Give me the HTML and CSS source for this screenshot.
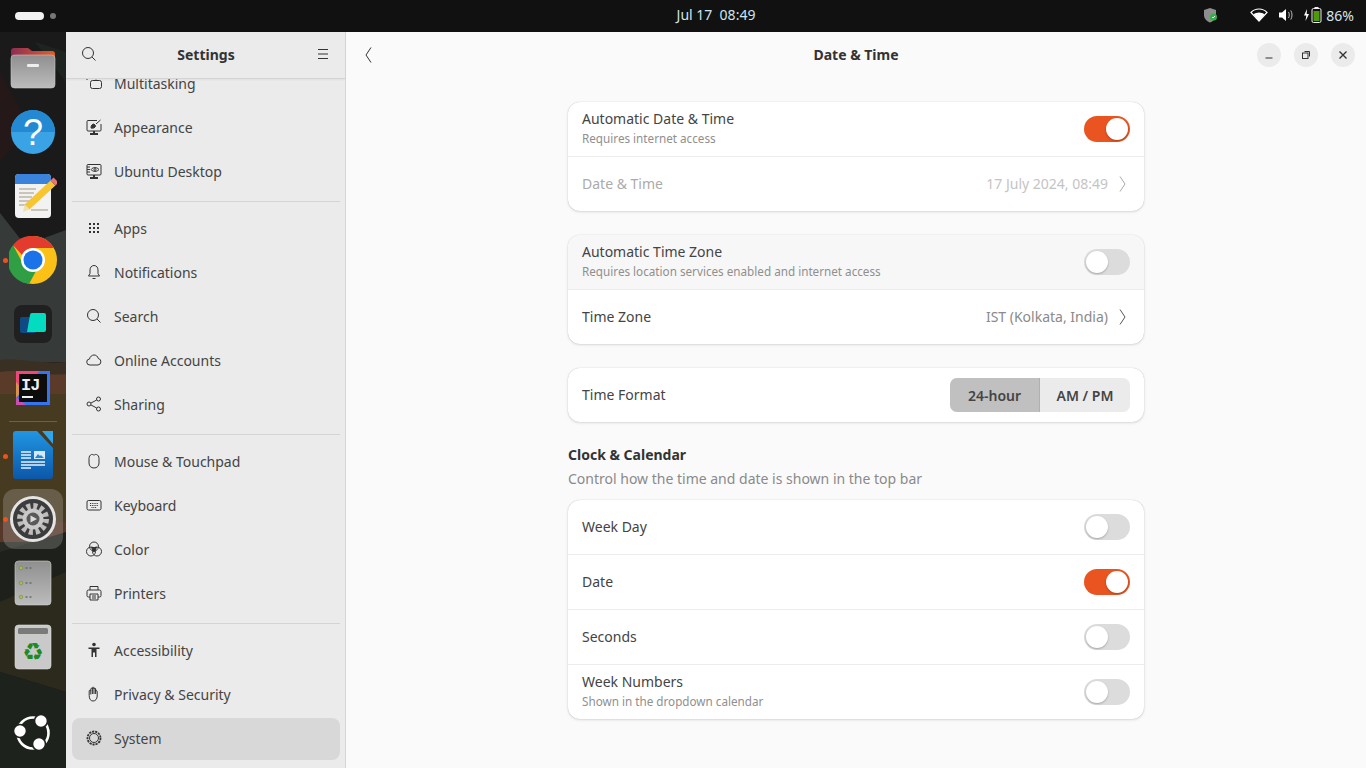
FILE: index.html
```html
<!DOCTYPE html>
<html lang="en">
<head>
    <meta charset="UTF-8">
    <meta name="viewport" content="width=device-width, initial-scale=1.0">
    <title>Date &amp; Time - Settings</title>
    <link rel="stylesheet" href="styles.css">
</head>
<body>
    <!-- Top bar -->
    <header class="topbar">
        <div class="workspaces"><span class="ws-pill"></span><span class="ws-dot"></span></div>
        <div class="clock">Jul 17&nbsp;&nbsp;08:49</div>
        <div class="tray">
            <svg class="tray-shield" width="18" height="18" viewBox="0 0 18 18"><path d="M8 2l6 2v5c0 3.500-2.500 6-6 7.500C4.500 15 2 12.500 2 9V4z" fill="#8e8e8e"/><circle cx="11.500" cy="11" r="3.500" fill="#2fb344"/><path d="M10 11l1 1 2-2" stroke="#fff" stroke-width="1" fill="none"/></svg>
            <svg class="tray-wifi" width="18" height="14" viewBox="0 0 18 14"><path d="M1 4.500C3 2.300 6 1 9 1s6 1.300 8 3.500L9 13z" fill="none" stroke="#fff" stroke-width="1.200"/><path d="M3.500 6.500C5 5.300 7 4.600 9 4.600s4 .7 5.500 1.900L9 13z" fill="#fff"/></svg>
            <svg class="tray-vol" width="16" height="14" viewBox="0 0 16 14"><path d="M1 4.500h3L8 1v12L4 9.500H1z" fill="#fff"/><path d="M10.500 4c1 1.700 1 4.300 0 6M12.800 2.500c1.600 2.500 1.600 6.500 0 9" fill="none" stroke="#bbb" stroke-width="1"/></svg>
            <svg class="tray-batt" width="22" height="18" viewBox="0 0 22 18"><path d="M4 3L1 9.500h2.300L2.500 15l3.500-7H3.700z" fill="#fff"/><rect x="9" y="2.500" width="9" height="14" rx="1.500" fill="none" stroke="#eee"/><rect x="11.500" y="1" width="4" height="1.500" fill="#eee"/><rect x="10.500" y="5" width="6" height="10" fill="#4f9a0a"/></svg>
            <span class="tray-pct">86%</span>
        </div>
    </header>

    <div class="desktop">
        <!-- Dock -->
        <nav class="dock">
            <svg class="dock-wall" width="66" height="736" viewBox="0 0 66 736">
                <rect width="66" height="736" fill="#1b1a1a"/>
                <path d="M0 40L30 95 0 130z" fill="#241818"/>
                <path d="M35 10L66 20V50z" fill="#1e2420"/>
                <path d="M0 181L25 213 66 198V330H0z" fill="#363b39"/>
                <path d="M0 328C20 326 40 332 66 330V345H0z" fill="#3a2f23"/>
                <path d="M0 340C25 336 45 345 66 342V364H0z" fill="#5a3a28"/>
                <path d="M0 362H66V490H0z" fill="#463a20"/>
                <path d="M0 490H66V512H0z" fill="#55382a"/>
                <path d="M0 510H66V525L0 520z" fill="#2a2a24"/>
                <path d="M0 520L66 500V600H0z" fill="#1e211b"/>
                <path d="M0 570L66 540V660L0 640z" fill="#2b2a1c"/>
                <path d="M0 640L66 660V736H0z" fill="#1d221d"/>
            </svg>
            <div class="dock-items">
                <!-- files -->
                <svg class="dock-icon" width="48" height="48" viewBox="0 0 48 48"><defs><linearGradient id="tabGrad"><stop offset="0" stop-color="#8c2d55"/><stop offset="1" stop-color="#e0602a"/></linearGradient><linearGradient id="grayGrad" x1="0" y1="0" x2="0" y2="1"><stop offset="0" stop-color="#8f8f8f"/><stop offset="1" stop-color="#bcbcbc"/></linearGradient></defs><path d="M2 7a3 3 0 0 1 3-3h14l4 3h20a3 3 0 0 1 3 3v8H2z" fill="url(#tabGrad)"/><rect x="2" y="11" width="44" height="33" rx="3.500" fill="url(#grayGrad)" stroke="#c8c8c8" stroke-width=".6"/><rect x="18" y="20" width="12" height="3" rx="1" fill="#eee"/></svg>
                <!-- help -->
                <svg class="dock-icon" width="48" height="48" viewBox="0 0 48 48"><circle cx="24" cy="24" r="22" fill="#3aa3e6"/><path d="M2 24a22 22 0 0 1 44 0z" fill="#2389d3"/><text x="24" y="37" class="help-mark">?</text></svg>
                <!-- notes -->
                <svg class="dock-icon" width="48" height="48" viewBox="0 0 48 48"><rect x="6" y="2" width="36" height="44" rx="4" fill="#f2f2f2"/><path d="M6 12V6a4 4 0 0 1 4-4h28a4 4 0 0 1 4 4v6z" fill="#3a82dc"/><path d="M10 17h17M10 21h15M10 25h13M10 29h11M10 33h9M22 38h17" stroke="#c9c5b8" stroke-width="2"/><path d="M18 35L44 11" stroke="#f7c531" stroke-width="7"/><path d="M44 11l3-3" stroke="#e87474" stroke-width="7"/><path d="M15.500 32.500l5 5-6.500 2.500z" fill="#f0e0b0"/></svg>
                <!-- chrome -->
                <svg class="dock-icon" width="48" height="48" viewBox="0 0 48 48"><circle cx="24" cy="24" r="24" fill="#fbc116"/><path d="M24 0a24 24 0 0 1 21 12H24a12 12 0 0 0-11 7L4 9A24 24 0 0 1 24 0z" fill="#e33b2e"/><path d="M4 9l10 19a11 11 0 0 0 13 7l-7 13A24 24 0 0 1 4 9z" fill="#2f9e44"/><circle cx="24" cy="24" r="12" fill="#fff"/><circle cx="24" cy="24" r="9.500" fill="#1a73e8"/></svg>
                <!-- tile app -->
                <svg class="dock-icon" width="48" height="48" viewBox="0 0 48 48"><rect x="5" y="5" width="38" height="38" rx="8" fill="#202020"/><rect x="11" y="17" width="16" height="16" rx="2" fill="#104a85"/><path d="M21 15a2 2 0 0 1 2-2h12a2 2 0 0 1 2 2v15a2 2 0 0 1-2 2H18z" fill="#04dcc0"/></svg>
                <!-- intellij -->
                <svg class="dock-icon" width="48" height="48" viewBox="0 0 48 48"><rect x="7" y="7" width="34" height="34" fill="#3574f0"/><path d="M7 7h24L7 30z" fill="#f0457d"/><path d="M7 18l7 8-7 8z" fill="#d9944a"/><path d="M7 33l10 8H7z" fill="#c94fb0"/><rect x="10" y="10" width="28" height="28" fill="#0c0c0c"/><text x="12" y="26" class="ij-mark">IJ</text><rect x="13" y="32" width="11" height="2" fill="#eee"/></svg>
                <span class="dock-sep"></span>
                <!-- writer -->
                <svg class="dock-icon" width="48" height="48" viewBox="0 0 48 48"><defs><linearGradient id="writerGrad" x1="0" y1="0" x2="0" y2="1"><stop offset="0" stop-color="#2196e3"/><stop offset="1" stop-color="#0c57a8"/></linearGradient></defs><path d="M4 3a3 3 0 0 1 3-3h21l16 17v28a3 3 0 0 1-3 3H7a3 3 0 0 1-3-3z" fill="url(#writerGrad)"/><path d="M33 0h11v13z" fill="#30a5ea"/><path d="M12 21h10M12 24h10M12 27h10M12 31h24M12 34h24M12 37h10" stroke="#e6f2fb" stroke-width="1.300"/><rect x="25" y="20" width="11" height="8" fill="#d6e9f8"/><path d="M26 27l3-4 2 2 1-1 3 3z" fill="#2a83cf"/></svg>
                <!-- settings, running -->
                <div class="dock-active">
                    <svg width="48" height="48" viewBox="0 0 48 48"><circle cx="24" cy="24" r="21.500" fill="#3c3c3c" stroke="#e4e4e4" stroke-width="3"/><circle cx="24" cy="24" r="13" fill="none" stroke="#bdbdbd" stroke-width="6" stroke-dasharray="4 2.800"/><circle cx="24" cy="24" r="10.500" fill="#c9c9c9"/><circle cx="24" cy="24" r="6.500" fill="#5a5a5a"/><path d="M21.500 20.500l6.500 3.500-6.500 3.500z" fill="#ddd"/></svg>
                </div>
                <!-- drive -->
                <svg class="dock-icon" width="48" height="48" viewBox="0 0 48 48"><rect x="6" y="2" width="36" height="44" rx="3.500" fill="url(#grayGrad)" stroke="#d0d0d0" stroke-width=".6"/><circle cx="12" cy="9" r="1.800" fill="#9acb34" stroke="#666" stroke-width=".4"/><circle cx="12" cy="24" r="1.800" fill="#9acb34" stroke="#666" stroke-width=".4"/><circle cx="12" cy="38" r="1.800" fill="#9acb34" stroke="#666" stroke-width=".4"/><path d="M16.500 9h2M20.500 9h2M16.500 24h2M20.500 24h2M16.500 38h2M20.500 38h2" stroke="#6a6a6a" stroke-width="1.600"/></svg>
                <!-- trash -->
                <svg class="dock-icon" width="48" height="48" viewBox="0 0 48 48"><rect x="6" y="2" width="36" height="44" rx="3.500" fill="#c9c9c9" stroke="#dedede" stroke-width=".6"/><rect x="9" y="5" width="30" height="6" rx="1.500" fill="#7a7a7a"/><text x="24" y="37" class="recycle-mark">♻</text></svg>
                <!-- ubuntu -->
                <svg class="dock-icon ubuntu" width="48" height="48" viewBox="0 0 48 48"><circle cx="24" cy="24" r="15.500" fill="none" stroke="#fff" stroke-width="2.600"/><circle cx="32" cy="12" r="6.500" fill="#fff" stroke="#1d221d" stroke-width="1.600"/><circle cx="11" cy="22" r="6.500" fill="#fff" stroke="#1d221d" stroke-width="1.600"/><circle cx="30" cy="35" r="6.500" fill="#fff" stroke="#1d221d" stroke-width="1.600"/></svg>
            </div>
            <span class="run-dot dot-chrome"></span>
            <span class="run-dot dot-writer"></span>
            <span class="run-dot dot-settings"></span>
        </nav>

        <!-- Settings sidebar -->
        <aside class="sidebar">
            <div class="side-head">
                <svg class="ico" viewBox="0 0 16 16"><circle cx="7" cy="7" r="5.500"/><path d="M11 11l3.500 3.500"/></svg>
                <span class="side-title">Settings</span>
                <svg class="ico" viewBox="0 0 16 16"><path d="M3 3.500h10M3 8h10M3 12.500h10"/></svg>
            </div>
            <div class="side-scroll">
                <ul class="side-list">
                    <li class="side-row"><svg class="ico" viewBox="0 0 16 16"><rect x="4.500" y="5.500" width="11" height="8" rx="2"/><path d="M1 5V1.500h2M7 1.500h3v3"/></svg>Multitasking</li>
                    <li class="side-row"><svg class="ico" viewBox="0 0 16 16"><path d="M11 1.500H2a1 1 0 0 0-1 1V11a1 1 0 0 0 1 1h12a1 1 0 0 0 1-1V5"/><path d="M4 15h8M8 12v3" stroke-width="2"/><path d="M5 9c0-3 1.500-4 3-4l1.500 1.500C9.500 9 7 9.500 5 9z" fill="#333"/><path d="M10 5l4.500-4"/></svg>Appearance</li>
                    <li class="side-row"><svg class="ico" viewBox="0 0 16 16"><rect x="1" y="1.500" width="14" height="10.500" rx="1"/><path d="M4 15h8M8 12v3" stroke-width="2"/><path d="M1 4h3M1 6.500h3M1 9h3M5 6.500c2-2.500 6-2.500 8 0-2 2.500-6 2.500-8 0z"/><circle cx="9" cy="6.500" r="1"/></svg>Ubuntu Desktop</li>
                </ul>
                <hr class="side-sep">
                <ul class="side-list">
                    <li class="side-row"><svg class="ico ico-fill" viewBox="0 0 16 16"><rect x="3" y="3" width="2" height="2"/><rect x="7" y="3" width="2" height="2"/><rect x="11" y="3" width="2" height="2"/><rect x="3" y="7" width="2" height="2"/><rect x="7" y="7" width="2" height="2"/><rect x="11" y="7" width="2" height="2"/><rect x="3" y="11" width="2" height="2"/><rect x="7" y="11" width="2" height="2"/><rect x="11" y="11" width="2" height="2"/></svg>Apps</li>
                    <li class="side-row"><svg class="ico" viewBox="0 0 16 16"><path d="M8 1.500c-2.500 0-4 2-4 4.500v3.500L2.500 12h11L12 9.500V6c0-2.500-1.500-4.500-4-4.500zM6.500 14.500h3"/></svg>Notifications</li>
                    <li class="side-row"><svg class="ico" viewBox="0 0 16 16"><circle cx="7" cy="7" r="5.500"/><path d="M11 11l3.500 3.500"/></svg>Search</li>
                    <li class="side-row"><svg class="ico" viewBox="0 0 16 16"><path d="M4 13a3 3 0 0 1-.5-6C4 4.500 6 3 8 3s3.800 1.300 4.300 3.500A3.300 3.300 0 0 1 12 13z"/></svg>Online Accounts</li>
                    <li class="side-row"><svg class="ico" viewBox="0 0 16 16"><circle cx="3" cy="8" r="2"/><circle cx="12.500" cy="3" r="2"/><circle cx="12.500" cy="13" r="2"/><path d="M5 7l5.700-3M5 9l5.700 3"/></svg>Sharing</li>
                </ul>
                <hr class="side-sep">
                <ul class="side-list">
                    <li class="side-row"><svg class="ico" viewBox="0 0 16 16"><path d="M3 5.500c0-2 1-3.500 2.500-4 1-.3 1.800.2 2.500.8.700-.6 1.500-1.100 2.500-.8 1.500.5 2.500 2 2.500 4V10c0 3-2 5-5 5s-5-2-5-5z"/></svg>Mouse &amp; Touchpad</li>
                    <li class="side-row"><svg class="ico" viewBox="0 0 16 16"><rect x="1" y="3.500" width="14" height="9.500" rx="1.500"/><path d="M4 6.500h8M4 8.500h8M5.500 10.500h5" stroke-dasharray="1 .8"/></svg>Keyboard</li>
                    <li class="side-row"><svg class="ico" viewBox="0 0 16 16"><circle cx="8" cy="5.500" r="4.500"/><circle cx="5" cy="10.500" r="4.500"/><circle cx="11" cy="10.500" r="4.500"/><path d="M5.500 6.500h5L8 11z" fill="#333"/></svg>Color</li>
                    <li class="side-row"><svg class="ico" viewBox="0 0 16 16"><path d="M4 5V1.500h8V5M4 12H2.500A1.500 1.500 0 0 1 1 10.500V6.500A1.500 1.500 0 0 1 2.500 5h11A1.500 1.500 0 0 1 15 6.500v4a1.500 1.500 0 0 1-1.500 1.500H12"/><path d="M4 9h8v6H4zM6 11h4M6 13h4"/></svg>Printers</li>
                </ul>
                <hr class="side-sep">
                <ul class="side-list">
                    <li class="side-row"><svg class="ico ico-fill" viewBox="0 0 16 16"><circle cx="8" cy="2.500" r="1.800"/><path d="M2.500 5.500h11v1.500H10.500V15H9V10.500H7V15H5.500V7H2.500z"/></svg>Accessibility</li>
                    <li class="side-row"><svg class="ico" viewBox="0 0 16 16"><path d="M3.200 9.500V5a.8.8 0 0 1 1.600 0V3a.8.8 0 0 1 1.600 0V2a.8.8 0 0 1 1.600 0v1a.8.8 0 0 1 1.600 0v2.500a.8.8 0 0 1 1.600 0V10c0 3-1.800 5-4.200 5s-3.800-2-3.800-5.500z"/><path d="M4.800 5v3.500M6.400 3v5M8 2v6M9.600 3v5"/></svg>Privacy &amp; Security</li>
                    <li class="side-row is-selected"><svg class="ico" viewBox="0 0 16 16"><circle cx="8" cy="8" r="4.500"/><circle cx="8" cy="8" r="6.500" stroke-width="1.800" stroke-dasharray="2.200 .9"/></svg>System</li>
                </ul>
            </div>
        </aside>

        <!-- Date & Time panel -->
        <main class="panel">
            <div class="panel-head">
                <svg class="ico back" viewBox="0 0 16 16"><path d="M10 .5L5 8l5 7.500"/></svg>
                <span class="panel-title">Date &amp; Time</span>
                <div class="win-btns">
                    <span class="win-btn"><svg class="ico" viewBox="0 0 12 12"><path d="M2.500 9h7"/></svg></span>
                    <span class="win-btn"><svg class="ico" viewBox="0 0 12 12"><rect x="2.500" y="4" width="5.500" height="5.500"/><path d="M4.500 2.500h5v5"/></svg></span>
                    <span class="win-btn"><svg class="ico" viewBox="0 0 12 12"><path d="M2.500 2.500l7 7M9.500 2.500l-7 7" stroke-width="1.400"/></svg></span>
                </div>
            </div>

            <div class="panel-body">
                <section class="card">
                    <div class="row">
                        <div class="row-text"><div class="row-label">Automatic Date &amp; Time</div><div class="row-sub">Requires internet access</div></div>
                        <span class="switch on"></span>
                    </div>
                    <div class="row is-off">
                        <div class="row-label">Date &amp; Time</div>
                        <div class="row-value">17 July 2024, 08:49</div>
                        <svg class="ico chev" viewBox="0 0 16 16"><path d="M6 .5l5 7.500-5 7.500"/></svg>
                    </div>
                </section>

                <section class="card">
                    <div class="row is-hover">
                        <div class="row-text"><div class="row-label">Automatic Time Zone</div><div class="row-sub">Requires location services enabled and internet access</div></div>
                        <span class="switch"></span>
                    </div>
                    <div class="row">
                        <div class="row-label">Time Zone</div>
                        <div class="row-value">IST (Kolkata, India)</div>
                        <svg class="ico chev" viewBox="0 0 16 16"><path d="M6 .5l5 7.500-5 7.500"/></svg>
                    </div>
                </section>

                <section class="card">
                    <div class="row">
                        <div class="row-label grow">Time Format</div>
                        <div class="segment">
                            <span class="seg active">24-hour</span>
                            <span class="seg">AM / PM</span>
                        </div>
                    </div>
                </section>

                <div class="group-head">
                    <h2 class="group-title">Clock &amp; Calendar</h2>
                    <p class="group-sub">Control how the time and date is shown in the top bar</p>
                </div>

                <section class="card">
                    <div class="row"><div class="row-label grow">Week Day</div><span class="switch"></span></div>
                    <div class="row"><div class="row-label grow">Date</div><span class="switch on"></span></div>
                    <div class="row"><div class="row-label grow">Seconds</div><span class="switch"></span></div>
                    <div class="row">
                        <div class="row-text"><div class="row-label">Week Numbers</div><div class="row-sub">Shown in the dropdown calendar</div></div>
                        <span class="switch"></span>
                    </div>
                </section>
            </div>
        </main>
    </div>
</body>
</html>
```

FILE: styles.css
```css
/* General */
html, body {
    margin: 0;
    padding: 0;
    height: 100%;
    overflow: hidden;
}
body {
    font-family: "Noto Sans", "Open Sans", sans-serif;
    font-size: 14px;
    color: #444;
    background: #111;
}
ul {
    list-style: none;
    margin: 0;
    padding: 0;
}
.ico {
    width: 16px;
    height: 16px;
    flex: none;
    fill: none;
    stroke: #333;
    stroke-width: 1;
}
.ico-fill {
    fill: #333;
    stroke: none;
}

/* Top bar */
.topbar {
    height: 32px;
    background: #111;
    color: #e8e8e8;
    display: grid;
    grid-template-columns: 1fr auto 1fr;
    align-items: center;
}
.workspaces {
    display: flex;
    align-items: center;
    gap: 6px;
    padding-left: 15px;
}
.ws-pill {
    width: 29px;
    height: 8px;
    border-radius: 4px;
    background: #f2f2f2;
}
.ws-dot {
    width: 6px;
    height: 6px;
    border-radius: 50%;
    background: #777;
}
.clock {
    color: #cfe3ee;
    font-size: 14px;
    margin: 0 0 3px 66px;
}
.tray {
    display: flex;
    align-items: center;
    justify-content: flex-end;
    padding-right: 12px;
    margin-bottom: 2px;
}
.tray-shield { margin-right: 30px; }
.tray-wifi { margin-right: 10px; }
.tray-vol { margin-right: 9px; }
.tray-batt { margin-right: 1px; }
.tray-pct {
    color: #d5e6f0;
    font-size: 14px;
}

/* Desktop area */
.desktop {
    display: flex;
    height: 736px;
}

/* Dock */
.dock {
    position: relative;
    width: 66px;
    flex: none;
    overflow: hidden;
}
.dock-wall {
    position: absolute;
    left: 0;
    top: 0;
}
.dock-items {
    position: relative;
    display: flex;
    flex-direction: column;
    align-items: center;
    padding-top: 12px;
    gap: 16px;
}
.dock-icon { display: block; flex: none; }
.dock-icon.ubuntu { margin-top: 22px; }
.dock-sep {
    width: 48px;
    height: 1px;
    background: rgba(255, 255, 255, 0.2);
    margin: -7px 0;
}
.dock-active {
    width: 60px;
    height: 60px;
    margin: -6px 0;
    border-radius: 12px;
    background: rgba(255, 255, 255, 0.18);
    display: flex;
    align-items: center;
    justify-content: center;
}
.help-mark {
    font-family: "Liberation Sans", sans-serif;
    font-size: 36px;
    fill: #fff;
    text-anchor: middle;
}
.ij-mark {
    font-family: "Liberation Mono", monospace;
    font-size: 17px;
    font-weight: 700;
    letter-spacing: -1px;
    fill: #eee;
}
.recycle-mark {
    font-family: "DejaVu Sans", sans-serif;
    font-size: 24px;
    fill: #1f8a1f;
    text-anchor: middle;
}
.run-dot {
    position: absolute;
    left: 3px;
    width: 5px;
    height: 5px;
    border-radius: 50%;
    background: #e95420;
}
.dot-chrome { top: 226px; }
.dot-writer { top: 422px; }
.dot-settings { top: 485px; }

/* Sidebar */
.sidebar {
    width: 279px;
    flex: none;
    background: #ebebeb;
    border-right: 1px solid #d6d6d6;
    display: flex;
    flex-direction: column;
}
.side-head {
    box-sizing: border-box;
    height: 47px;
    flex: none;
    display: flex;
    align-items: center;
    justify-content: space-between;
    padding: 0 14px 2px 15px;
    border-bottom: 1px solid #d4d4d4;
    box-shadow: 0 1px 2px rgba(0, 0, 0, 0.05);
    position: relative;
    z-index: 1;
}
.side-title {
    font-weight: 700;
    font-size: 14px;
    color: #333;
}
.side-scroll {
    flex: 1;
    overflow: hidden;
    padding: 0 5px 0 6px;
}
.side-scroll > .side-list:first-child {
    margin-top: -17px;
}
.side-list {
    display: flex;
    flex-direction: column;
    gap: 2px;
    padding: 1px 0;
}
.side-row {
    box-sizing: border-box;
    height: 42px;
    padding: 0 8px 2px 14px;
    display: flex;
    align-items: center;
    gap: 12px;
    border-radius: 8px;
    font-size: 14px;
    color: #444;
}
.side-row.is-selected {
    background: #d8d8d8;
}
.side-sep {
    border: 0;
    border-top: 1px solid #d4d4d4;
    margin: 7px 0 5px;
}

/* Panel */
.panel {
    flex: 1;
    background: #fafafa;
    display: flex;
    flex-direction: column;
    min-width: 0;
}
.panel-head {
    box-sizing: border-box;
    height: 46px;
    flex: none;
    position: relative;
    display: flex;
    align-items: center;
    justify-content: center;
    padding-bottom: 2px;
}
.back {
    position: absolute;
    left: 15px;
    top: 15px;
}
.panel-title {
    font-weight: 700;
    font-size: 14px;
    color: #333;
}
.win-btns {
    position: absolute;
    right: 11px;
    top: 11px;
    display: flex;
    gap: 13px;
}
.win-btn {
    width: 24px;
    height: 24px;
    border-radius: 50%;
    background: #ebebeb;
    display: flex;
    align-items: center;
    justify-content: center;
}
.win-btn .ico { width: 12px; height: 12px; }
.panel-body {
    width: 576px;
    margin: 0 auto;
    padding-top: 24px;
}

/* Cards and rows */
.card {
    background: #fff;
    border-radius: 12px;
    box-shadow: 0 0 1px rgba(0, 0, 0, 0.25), 0 1px 3px rgba(0, 0, 0, 0.12);
    margin-bottom: 24px;
    overflow: hidden;
}
.row {
    box-sizing: border-box;
    height: 55px;
    padding: 0 14px;
    display: flex;
    align-items: center;
    border-bottom: 1px solid #ececec;
}
.row:last-child {
    height: 54px;
    border-bottom: 0;
}
.row.is-hover {
    background: #f7f7f7;
}
.row-text, .grow {
    flex: 1;
}
.row-text {
    padding-bottom: 2px;
}
.row-label {
    font-size: 14px;
    line-height: 20px;
    color: #444;
}
.row-sub {
    font-size: 11.7px;
    line-height: 18px;
    color: #8f8f8f;
}
.row-value {
    flex: 1;
    text-align: right;
    color: #8a8a8a;
    font-size: 14px;
    margin-right: 6px;
    padding-bottom: 2px;
}
.row.is-off .row-label { color: #ababab; }
.row.is-off .row-value { color: #c4c4c4; }
.row.is-off .chev { stroke: #a8a8a8; }
.chev { stroke: #555; }

.switch {
    position: relative;
    width: 46px;
    height: 26px;
    flex: none;
    border-radius: 13px;
    background: #dcdcdc;
}
.switch::after {
    content: "";
    position: absolute;
    left: 2px;
    top: 2px;
    width: 22px;
    height: 22px;
    border-radius: 50%;
    background: #fff;
    box-shadow: 0 1px 2px rgba(0, 0, 0, 0.25);
}
.switch.on { background: #e95420; }
.switch.on::after { left: 22px; }

.segment {
    display: flex;
    height: 34px;
    border-radius: 7px;
    overflow: hidden;
    background: #ebebeb;
}
.seg {
    box-sizing: border-box;
    width: 90px;
    display: flex;
    align-items: center;
    justify-content: center;
    font-weight: 600;
    font-size: 14px;
    color: #444;
}
.seg.active {
    background: #c0c0c0;
    border-right: 1px solid #b0b0b0;
}

.group-head {
    margin: -1px 0 11px;
}
.group-title {
    margin: 0;
    font-size: 14px;
    line-height: 20px;
    font-weight: 700;
    color: #333;
}
.group-sub {
    margin: 4px 0 0;
    font-size: 14px;
    line-height: 20px;
    color: #8a8a8a;
}
```
